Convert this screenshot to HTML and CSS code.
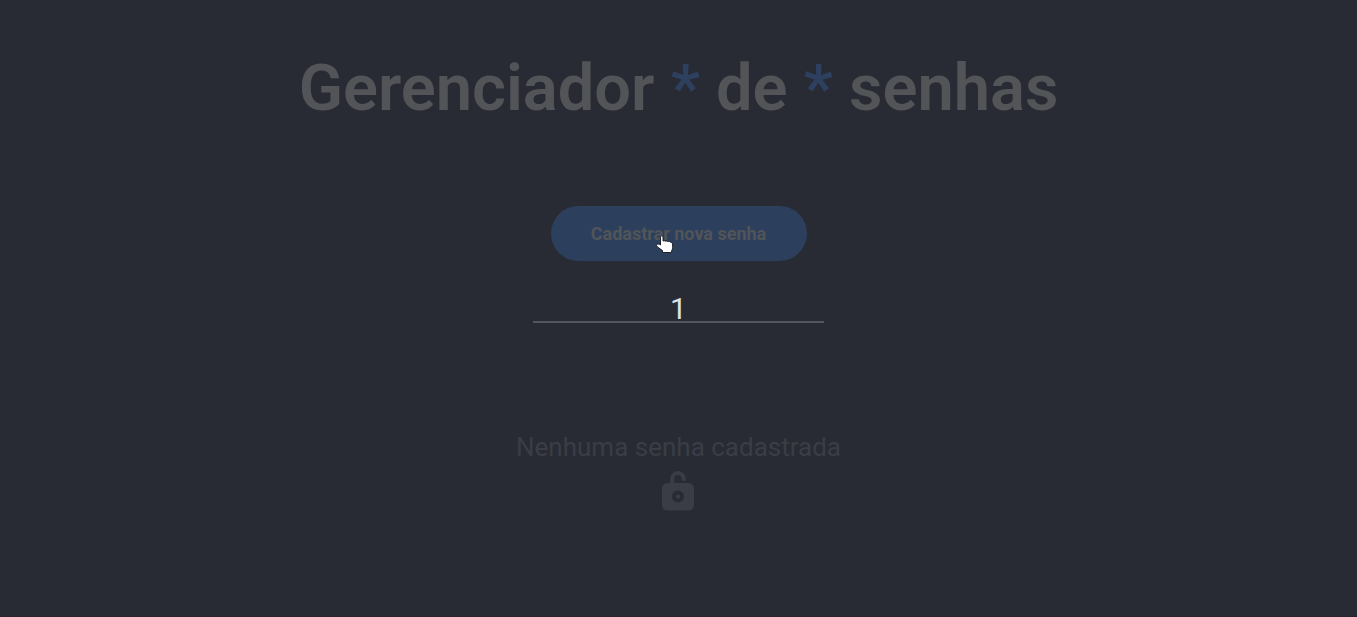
FILE: index.html
```html
<!DOCTYPE html>
<html lang="pt-BR">
<head>
<meta charset="utf-8">
<meta name="viewport" content="width=device-width, initial-scale=1">
<title>Gerenciador de senhas</title>
<link rel="stylesheet" href="styles.css">
</head>
<body>
<main class="page">
  <h1 class="title">Gerenciador <span class="star">*</span> de <span class="star">*</span> senhas</h1>
  <div class="action">
    <button class="register" type="button">Cadastrar nova senha</button>
    <svg class="pointer" viewBox="0 0 18 20" aria-hidden="true">
      <path d="M4.500 2Q4.500 .8 5.700 .8T7 2V6Q8.500 5.200 9.500 6.200Q11 5.400 12.200 6.600Q13.600 6 14.600 7.200Q16.600 7 16.600 9V12.500Q16.600 14.500 15.600 15.500V17.500H6.500V15.500L1.500 12Q0 10.500 .8 9.500Q1.800 8.500 3.200 9.200L4.500 10Z"/>
    </svg>
  </div>
  <input class="field" type="text" value="1" aria-label="Buscar senha">
  <section class="empty">
    <p class="message">Nenhuma senha cadastrada</p>
    <svg class="lock" viewBox="0 0 32 40" aria-hidden="true">
      <path class="shackle" d="M10.300 13V7.700A5.700 5.700 0 0 1 21.700 7.700V8.200"/>
      <path class="case" fill-rule="evenodd" d="M6 12H26Q32 12 32 18V33.500Q32 39.500 26 39.500H6Q0 39.500 0 33.500V18Q0 12 6 12ZM16 19.500A6 6 0 1 0 16 31.500A6 6 0 1 0 16 19.500Z"/>
      <circle class="case" cx="16" cy="25.500" r="2"/>
    </svg>
  </section>
</main>
</body>
</html>
```
FILE: styles.css
```css
* { box-sizing: border-box; }
body {
  margin: 0;
  background: #282b34;
  color: #525458;
  font-family: Roboto, "Liberation Sans", sans-serif;
}
.page {
  min-height: 100vh;
  padding-top: 48px;
  display: flex;
  flex-direction: column;
  align-items: center;
  border-bottom: 1px solid #2a2030;
}
.title {
  margin: 0;
  font-size: 65px;
  line-height: 80px;
  font-weight: 600;
  text-align: center;
}
.star { color: #2d4060; }
.action { position: relative; margin-top: 78px; }
.register {
  display: block;
  min-width: 256px;
  padding: 16px 32px;
  border: 0;
  border-radius: 28px;
  background: #2c405d;
  color: #525458;
  font: 700 18px/23px Roboto, "Liberation Sans", sans-serif;
  cursor: pointer;
}
.pointer {
  position: absolute;
  left: 105px;
  top: 29px;
  width: 18px;
  height: 20px;
  overflow: visible;
  fill: #fff;
  stroke: #20232a;
  stroke-width: 1;
}
.field {
  width: 291px;
  max-width: 90%;
  height: 28px;
  margin-top: 34px;
  padding: 0;
  border: 0;
  border-bottom: 2px solid #54565b;
  outline: 0;
  background: transparent;
  color: #dfe1e4;
  font: 400 30px/26px Roboto, "Liberation Sans", sans-serif;
  text-align: center;
}
.empty {
  margin-top: 108px;
  display: flex;
  flex-direction: column;
  align-items: center;
  color: #3a3d45;
}
.message { margin: 0; font-size: 26px; line-height: 32px; }
.lock { width: 32px; height: 40px; margin-top: 8px; overflow: visible; }
.case { fill: #3a3d45; }
.shackle {
  fill: none;
  stroke: #3a3d45;
  stroke-width: 4;
  stroke-linecap: round;
}
```
